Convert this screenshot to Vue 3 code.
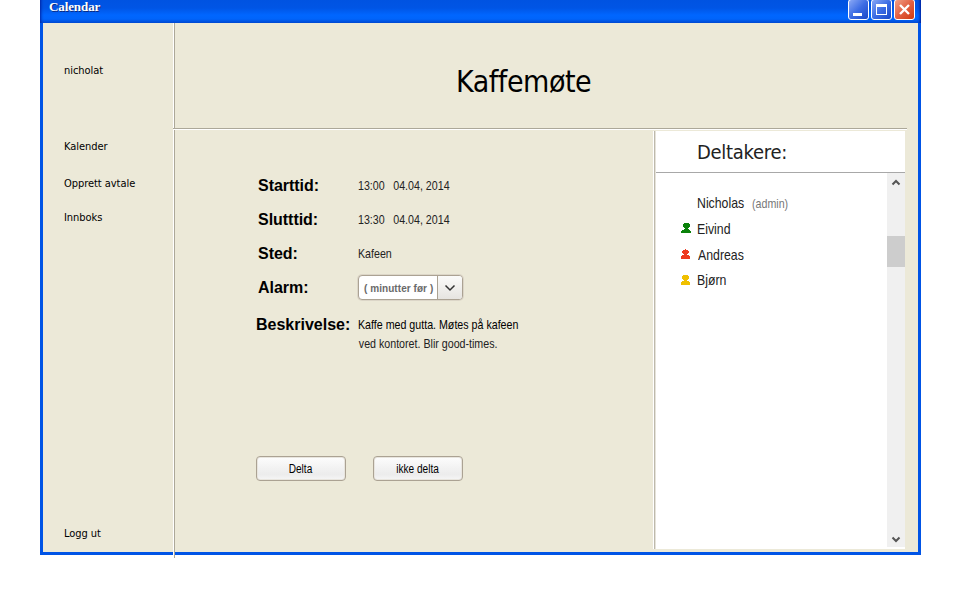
<script setup>
const details = [
  { label: 'Starttid:', time: '13:00', value: '04.04, 2014' },
  { label: 'Slutttid:', time: '13:30', value: '04.04, 2014' },
  { label: 'Sted:', value: 'Kafeen' },
]
const people = [
  { name: 'Eivind', status: 'yes' },
  { name: 'Andreas', status: 'no' },
  { name: 'Bjørn', status: 'maybe' },
]
const figures = {
  yes: 'M3 0h5v1h1v3H8v1H7v1h1v1h1v1h1v2H0V8h1V7h2V6h1V5H3V4H2V1h1z',
  no: 'M4 0h1v1h2v1h1v2H7v1H6v1h2v1h1v3H0V7h1V6h2V5H2V4H1V2h1V1h2z',
  maybe: 'M2 0h5v1h1v3H7v1H6v1h2v1h1v3H0V7h1V6h2V5H2V4H1V1h1z',
}
</script>

<template>
  <div class="window">
    <header class="titlebar">
      <span class="title">Calendar</span>
      <div class="controls">
        <button class="ctl" aria-label="Minimize">
          <svg width="21" height="21"><path d="M5 14h9v3H5z" fill="#fff" /></svg>
        </button>
        <button class="ctl" aria-label="Maximize">
          <svg width="21" height="21"><path d="M5 5h11v11H5zM6 8v7h9V8z" fill="#fff" fill-rule="evenodd" /></svg>
        </button>
        <button class="ctl close" aria-label="Close">
          <svg width="21" height="21"><path d="M6 6l9 9M15 6l-9 9" stroke="#fff" stroke-width="2.4" /></svg>
        </button>
      </div>
    </header>
    <div class="body">
      <nav class="side">
        <span class="link user">nicholat</span>
        <span class="link kal">Kalender</span>
        <span class="link opp">Opprett avtale</span>
        <span class="link inn">Innboks</span>
        <span class="link out">Logg ut</span>
      </nav>
      <div class="content">
        <div class="heading"><h1>Kaffemøte</h1></div>
        <div class="lower">
          <main class="form">
            <div v-for="d in details" :key="d.label" class="row">
              <b class="label">{{ d.label }}</b>
              <span class="val"><span v-if="d.time" class="time">{{ d.time }}</span>{{ d.value }}</span>
            </div>
            <div class="row">
              <b class="label">Alarm:</b>
              <div class="select">
                <span class="sel-text">( minutter før )</span>
                <span class="sel-btn">
                  <svg width="24" height="23"><path d="M7.500 9.500l4.500 4.500 4.500-4.500" fill="none" stroke="#333" stroke-width="1.5" /></svg>
                </span>
              </div>
            </div>
            <div class="row desc">
              <b class="label wide">Beskrivelse:</b>
              <div class="val text">
                <span class="first">Kaffe med gutta. Møtes på kafeen</span>
                <span class="second">ved kontoret. Blir good-times.</span>
              </div>
            </div>
            <div class="actions">
              <button class="btn"><span>Delta</span></button>
              <button class="btn"><span>ikke delta</span></button>
            </div>
          </main>
          <aside class="panel">
            <div class="panel-head"><h2>Deltakere:</h2></div>
            <div class="panel-body">
              <ul class="people">
                <li><i class="icon"></i><span class="name">Nicholas</span><small>(admin)</small></li>
                <li v-for="p in people" :key="p.name" :class="p.status">
                  <svg class="icon" width="10" height="10" shape-rendering="crispEdges">
                    <path :d="figures[p.status]" fill="currentColor" />
                  </svg>
                  <span class="name">{{ p.name }}</span>
                </li>
              </ul>
              <div class="scroll">
                <svg width="18" height="20"><path d="M5.500 11.500L9 8l3.500 3.500" fill="none" stroke="#555" stroke-width="2" /></svg>
                <div class="thumb"></div>
                <svg class="down" width="18" height="20"><path d="M5.500 10.500L9 14l3.500-3.500" fill="none" stroke="#555" stroke-width="2" /></svg>
              </div>
            </div>
          </aside>
        </div>
      </div>
    </div>
  </div>
</template>

<style>
body { background: #fff; }
</style>

<style scoped>
* { box-sizing: border-box; }
h1, h2, ul { margin: 0; padding: 0; font-weight: 400; list-style: none; }
button { padding: 0; font: inherit; }
svg { display: block; }
.window { width: 881px; margin-left: 40px; padding-bottom: 10px; font-family: "Liberation Sans", Arial, sans-serif; color: #000; white-space: nowrap; }
.titlebar {
  height: 23px; padding: 0 6px 0 9px; display: flex; justify-content: space-between;
  background: linear-gradient(#0053e1 0, #0055e5 8px, #0066ff 15px, #0064fb 19px, #0048d0 23px);
  box-shadow: inset 4px 0 3px -3px #0020a0, inset -4px 0 3px -3px #001890;
}
.title { font: bold 13px/14px "Liberation Serif", serif; letter-spacing: -0.1px; color: #fff; text-shadow: 1px 1px 0 #0a2a80; }
.controls { display: flex; gap: 2px; margin-top: -1px; height: 21px; }
.ctl {
  width: 21px; height: 21px; border: 1px solid #fff; border-radius: 3px;
  background: linear-gradient(135deg, #8aa8f5, #3c6ce4 50%, #1a48c8);
}
.ctl svg { margin: -1px; }
.close { background: linear-gradient(135deg, #f0a088, #e26042 50%, #d03a10); }
.body {
  height: 532px; border: solid #0054e6; border-width: 0 3px 3px; background: #ece9d8;
  display: flex;
}
.side {
  width: 132px; height: 535px; flex: none; padding-left: 21px; display: flex; flex-direction: column;
  border-right: 1px solid #aca899; box-shadow: inset -1px 0 #fff;
}
.link { font: 11px/14px "DejaVu Sans Condensed", "DejaVu Sans", sans-serif; font-stretch: condensed; letter-spacing: -0.050px; height: 14px; }
.user { margin-top: 41px; }
.kal { margin-top: 62px; }
.opp { margin-top: 23px; }
.inn { margin-top: 20px; }
.out { margin-top: 302px; }
.content { flex: 1; display: flex; flex-direction: column; }
.heading {
  height: 107px; width: 734px; margin-left: -2px; border-bottom: 1px solid #fff; box-shadow: inset 0 -1px #aca899;
  padding: 39px 0 0 283px;
}
h1 { font: 30px/40px "DejaVu Sans Condensed", "DejaVu Sans", sans-serif; font-stretch: condensed; letter-spacing: -0.450px; }
.lower { display: flex; height: 422px; }
.form { width: 478px; flex: none; padding: 39px 0 0 83px; }
.row { display: flex; height: 34px; }
.label { width: 100px; font-size: 16px; line-height: 34px; letter-spacing: -0.030px; }
.val { font-size: 13px; line-height: 34px; color: #222; transform: scaleX(.82); transform-origin: 0 0; }
.time { display: inline-block; width: 43px; }
.select {
  width: 105px; height: 25px; margin: 4px 0 0; display: flex; overflow: hidden; background: #fff;
  border: 1px solid #aba293; border-radius: 4px; box-shadow: 0 0 0 1px #dcd6c8;
}
.sel-text { width: 78px; padding-left: 5px; font: bold 10px/25px "Liberation Sans", sans-serif; letter-spacing: 0.060px; color: #6a6a6a; }
.sel-btn { width: 25px; border-left: 1px solid #aba293; background: linear-gradient(#fbfbfa, #e6e4e0); }
.desc { margin: 3px 0 0 -2px; height: 72px; }
.wide { width: 102px; letter-spacing: 0; }
.text { display: flex; flex-direction: column; line-height: 19px; padding-top: 7px; }
.first { color: #000; }
.second { padding-left: 1px; }
.actions { display: flex; gap: 27px; margin: 76px 0 0 -2px; }
.btn {
  width: 90px; height: 25px; border: 1px solid #aba293; border-radius: 4px;
  background: linear-gradient(#fdfdfd, #ececec 75%, #f6f6f6); box-shadow: inset 0 0 0 1px #e8e5de;
}
.btn span { display: block; font-size: 12px; line-height: 24px; transform: scaleX(.84); color: #000; margin-left: -1px; }
.panel { width: 252px; height: 418px; margin-top: 1px; background: #fff; border-left: 1px solid #fff; box-shadow: inset 1px 0 #bdb9ac, inset 2px 0 #e6e3da; padding-left: 2px; }
.panel-head { height: 42px; border-bottom: 1px solid #a8a8a8; padding: 6px 0 0 41px; }
h2 { font: 20px/30px "DejaVu Sans Condensed", "DejaVu Sans", sans-serif; font-stretch: condensed; letter-spacing: -0.280px; color: #222; }
.panel-body { display: flex; justify-content: space-between; height: 375px; }
.people { padding: 17px 0 0 25px; }
.people li { display: flex; height: 25.700px; line-height: 26px; }
.icon { width: 10px; margin: 7px 6px 0 0; flex: none; }
.name { font-size: 15px; color: #222; transform: scaleX(.82); transform-origin: 0 0; }
small { font-size: 13px; color: #777; transform: scaleX(.82); transform-origin: 0 0; margin-left: -3px; line-height: 27px; }
.yes { color: #0a820a; }
.no { color: #ee3a20; }
.no .name { margin-left: 1px; padding-top: 1px; }
.maybe { color: #f0c000; }
.maybe .icon { margin-top: 8px; }
.no .icon { margin-top: 8px; }
.scroll { width: 18px; height: 374px; background: #f0f0f0; display: flex; flex-direction: column; }
.thumb { height: 31px; margin-top: 43px; background: #cdcdcd; }
.down { margin-top: auto; }
</style>
